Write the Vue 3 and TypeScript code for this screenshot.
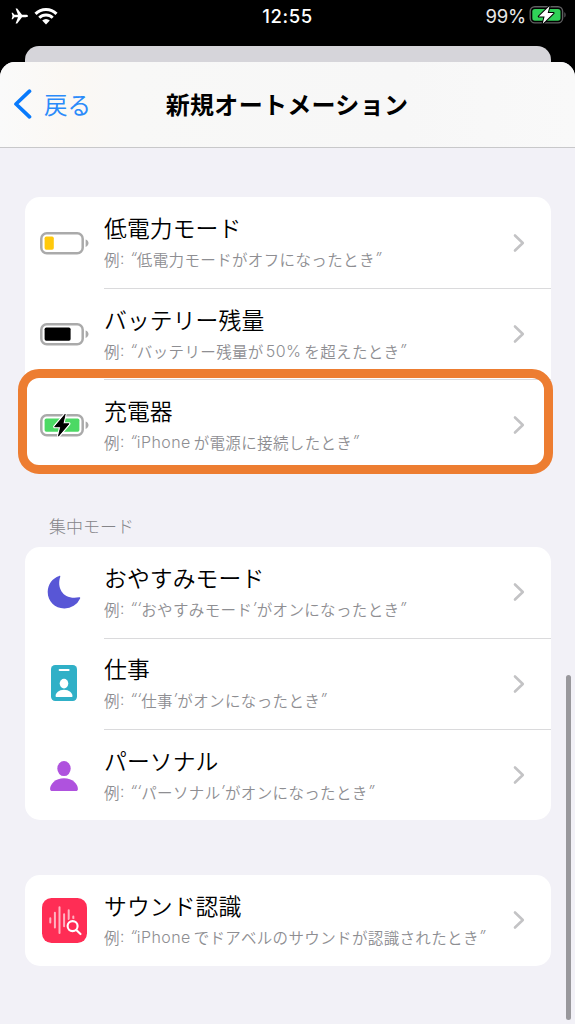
<script setup lang="ts">
type IconName = 'low' | 'level' | 'charger' | 'moon' | 'badge' | 'person' | 'sound'

interface Part {
  text: string
  kind: 'jp' | 'quote' | 'latin'
}

interface Row {
  icon: IconName
  title: string
  parts: Part[]
  highlighted?: boolean
}

interface Group {
  id: string
  heading?: string
  rows: Row[]
}

const jp = (text: string): Part => ({ text, kind: 'jp' })
const quote = (text: string): Part => ({ text, kind: 'quote' })
const latin = (text: string): Part => ({ text, kind: 'latin' })

const groups: Group[] = [
  {
    id: 'power',
    rows: [
      { icon: 'low', title: '低電力モード', parts: [quote('“'), jp('低電力モードがオフになったとき'), quote('”')] },
      { icon: 'level', title: 'バッテリー残量', parts: [quote('“'), jp('バッテリー残量が'), latin('50%'), jp('を超えたとき'), quote('”')] },
      { icon: 'charger', title: '充電器', highlighted: true, parts: [quote('“'), latin('iPhone'), jp('が電源に接続したとき'), quote('”')] },
    ],
  },
  {
    id: 'focus',
    heading: '集中モード',
    rows: [
      { icon: 'moon', title: 'おやすみモード', parts: [quote('“‘'), jp('おやすみモード'), quote('’'), jp('がオンになったとき'), quote('”')] },
      { icon: 'badge', title: '仕事', parts: [quote('“‘'), jp('仕事'), quote('’'), jp('がオンになったとき'), quote('”')] },
      { icon: 'person', title: 'パーソナル', parts: [quote('“‘'), jp('パーソナル'), quote('’'), jp('がオンになったとき'), quote('”')] },
    ],
  },
  {
    id: 'sound',
    rows: [
      { icon: 'sound', title: 'サウンド認識', parts: [quote('“'), latin('iPhone'), jp('でドアベルのサウンドが認識されたとき'), quote('”')] },
    ],
  },
]
</script>

<template>
  <div class="screen">
    <div class="status">
      <div class="status-left">
        <svg class="plane" width="18" height="16" viewBox="0 0 18 16">
          <path d="M17 8c0-.8-1-1.200-2.200-1.200H11L6.200.6H4.600L7 6.800H3.400L1.800 4.700H.6L1.500 8 .6 11.300h1.200l1.600-2.100H7L4.600 15.400h1.600L11 9.200h3.800C16 9.200 17 8.800 17 8z" fill="#fff" />
        </svg>
        <svg class="wifi" width="24" height="18" viewBox="0 0 24 18">
          <g fill="none" stroke="#fff" stroke-width="3">
            <path d="M1.500 6.900a14.900 14.900 0 0 1 21 0" />
            <path d="M5.300 10.800a9.500 9.500 0 0 1 13.400 0" />
          </g>
          <path d="M8.200 13.600a5.400 5.400 0 0 1 7.600 0L12 17.400z" fill="#fff" />
        </svg>
      </div>
      <div class="clock">12:55</div>
      <div class="status-right">
        <span class="percent">99%</span>
        <svg width="38" height="20" viewBox="0 0 38 20">
          <rect x="1.200" y="1.700" width="32.400" height="16.200" rx="4.600" fill="none" stroke="#606062" stroke-width="1.400" />
          <path d="M35.400 7.200c1.600.6 1.600 4.600 0 5.200z" fill="#606062" />
          <rect x="3.300" y="3.900" width="28.200" height="11.800" rx="2.600" fill="#30d158" />
          <path d="M20.600.9 9.800 11.500h5.800L13.700 18.700 24.600 8.100h-5.900z" fill="#fff" stroke="#000" stroke-width="2" stroke-linejoin="round" paint-order="stroke" />
        </svg>
      </div>
    </div>

    <div class="sheet-behind"></div>

    <div class="sheet">
      <header class="nav">
        <div class="back">
          <svg width="19" height="30" viewBox="0 0 19 30">
            <path d="M16.500 2.200 3 15 16.500 27.800" fill="none" stroke="#087afc" stroke-width="3.700" stroke-linecap="round" stroke-linejoin="round" />
          </svg>
          <span>戻る</span>
        </div>
        <h1>新規オートメーション</h1>
      </header>

      <main class="content">
        <section v-for="group in groups" :key="group.id" class="group" :class="group.id">
          <h2 v-if="group.heading">{{ group.heading }}</h2>
          <div class="card">
            <div v-for="row in group.rows" :key="row.icon" class="row">
              <div class="icon" :class="row.icon">
                <svg v-if="row.icon === 'low' || row.icon === 'level' || row.icon === 'charger'" width="50" height="26" viewBox="0 0 50 26">
                  <rect x="1.300" y="3.300" width="41.400" height="19.900" rx="5.500" fill="none" stroke="#aaa" stroke-width="2.500" />
                  <path d="M45.600 9.600c3.900 1.100 3.900 6.200 0 7.300z" fill="#aaa" />
                  <rect v-if="row.icon === 'low'" x="4.600" y="6.600" width="9.200" height="13.200" rx="1.700" fill="#ffc90c" />
                  <rect v-if="row.icon === 'level'" x="4.600" y="6.600" width="26" height="13.200" rx="1.700" fill="#000" />
                  <template v-if="row.icon === 'charger'">
                    <rect x="4.600" y="6.600" width="34.800" height="13.200" rx="1.700" fill="#4cd964" />
                    <path d="M25.200 2.200 14.600 14.800h6L18.400 24.200 29 11.700h-6z" fill="#000" stroke="#fff" stroke-width="3" stroke-linejoin="round" paint-order="stroke" />
                    <path d="M25.200 2.200 14.600 14.800h6L18.400 24.200 29 11.700h-6z" fill="#000" stroke="#000" stroke-width="0.700" stroke-linejoin="round" />
                  </template>
                </svg>
                <svg v-else-if="row.icon === 'moon'" width="34" height="34" viewBox="0 0 34 34">
                  <path d="M12.200.9C13.100.6 13.500 1.100 13.200 1.900 9.500 13 16.300 25.300 32.100 22.300c.9-.2 1.300.3 1 1.100A17 17 0 0 1 17.200 33.500C8 33.500.7 26.500.7 17.100.7 9.500 5.300 3.100 12.200.9z" fill="#5856d6" />
                </svg>
                <svg v-else-if="row.icon === 'badge'" width="26" height="36" viewBox="0 0 26 36">
                  <rect width="26" height="36" rx="4.200" fill="#30b0c7" />
                  <rect x="7.600" y="3.900" width="11" height="2" rx="1" fill="#fff" />
                  <ellipse cx="13" cy="18.600" rx="4.300" ry="4.800" fill="#fff" />
                  <path d="M5.600 32.100c-.7 0-1-.4-1-1.100 0-3.200 3.200-6.300 8.400-6.300s8.500 3.100 8.500 6.300c0 .7-.3 1.100-1 1.100z" fill="#fff" />
                </svg>
                <svg v-else-if="row.icon === 'person'" width="28" height="32" viewBox="0 0 28 32">
                  <ellipse cx="14" cy="8.600" rx="6.700" ry="7.500" fill="#af52de" />
                  <path d="M2.200 31C.9 31 .1 30.400.1 28.900.1 24.100 5.400 18.300 14 18.300S27.900 24.100 27.900 28.900c0 1.500-.8 2.100-2.100 2.100z" fill="#af52de" />
                </svg>
                <svg v-else width="45" height="45" viewBox="0 0 45 45">
                  <rect width="45" height="45" rx="9.500" fill="#ff2d55" />
                  <g stroke="#ffb3c2" stroke-width="2" stroke-linecap="round">
                    <path d="M8.300 20.200v4.300M12.900 14.800v14.800M17.500 9.300V35M22.100 16.200v12M26.700 12.200v9M31.300 18.600v2" />
                  </g>
                  <circle cx="30.600" cy="28.100" r="5.100" fill="#ff2d55" stroke="#ff2d55" stroke-width="4.500" />
                  <g fill="none" stroke="#fff" stroke-width="2.100">
                    <circle cx="30.600" cy="28.100" r="5" />
                    <path d="m34.300 31.900 4.200 4.200" stroke-linecap="round" />
                  </g>
                </svg>
              </div>
              <div class="body">
                <div class="text">
                  <div class="title">{{ row.title }}</div>
                  <div class="example">
                    <span class="jp">例</span><span class="colon">:</span><span v-for="(part, i) in row.parts" :key="i" :class="part.kind">{{ part.text }}</span>
                  </div>
                </div>
                <svg class="chevron" width="12" height="20" viewBox="0 0 12 20">
                  <path d="m2 2.500 7.800 7.500L2 17.500" fill="none" stroke="#c3c3c5" stroke-width="2.600" stroke-linecap="round" stroke-linejoin="round" />
                </svg>
              </div>
              <div v-if="row.highlighted" class="highlight"></div>
            </div>
          </div>
        </section>
      </main>
      <div class="scrollbar"></div>
    </div>
  </div>
</template>

<style>
body {
  margin: 0;
  overflow: hidden;
}
</style>

<style scoped>
.screen {
  position: relative;
  display: flex;
  flex-direction: column;
  width: 575px;
  height: 1024px;
  overflow: hidden;
  background: #000;
  font-family: "Noto Sans CJK JP", sans-serif;
}
.status {
  display: grid;
  grid-template-columns: 1fr auto 1fr;
  height: 46px;
  color: #fff;
  font-family: Inter, sans-serif;
  line-height: 32px;
}
.status-left {
  display: flex;
  gap: 5px;
  padding: 7px 0 0 11px;
}
.plane {
  margin-top: 1px;
}
.clock {
  font-size: 18.500px;
  font-weight: 500;
  letter-spacing: 0.55px;
}
.status-right {
  display: flex;
  justify-content: flex-end;
  padding-right: 8px;
}
.status-right svg {
  margin: 5px 0 0 3px;
}
.percent {
  font-size: 18.500px;
  letter-spacing: -0.2px;
  color: #e9e9e9;
}
.sheet-behind {
  height: 15.500px;
  margin: 0 24.500px;
  border-radius: 14px 14px 0 0;
  background: #d6d5da;
}
.sheet {
  position: relative;
  flex: 1;
  border-radius: 15px 15px 0 0;
  background: #f2f1f7;
}
.nav {
  display: grid;
  grid-template-columns: 1fr auto 1fr;
  align-items: center;
  box-sizing: border-box;
  height: 86.500px;
  border-bottom: 1.500px solid #c8c8ca;
  border-radius: 15px 15px 0 0;
  background: linear-gradient(90deg, #fafafa 0, #fbf8f4 12%, #f8f8f7 22%, #f7f7f7 70%, #f9f9f9 100%);
}
.back {
  display: flex;
  align-items: center;
  gap: 12px;
  padding-left: 13px;
  color: #2b8bfa;
  font-size: 23.500px;
}
h1 {
  margin: -2px 0.500px 0 -0.500px;
  font-size: 24px;
  font-weight: 700;
  letter-spacing: 0.3px;
}
.content {
  padding: 49px 24.500px 0;
}
.group.sound {
  margin-top: 54.500px;
}
h2 {
  display: flex;
  align-items: flex-end;
  height: 67px;
  margin: 0;
  padding: 0 0 9px 24.500px;
  color: #858589;
  font-size: 17px;
  font-weight: 300;
  line-height: 24px;
}
.card {
  border-radius: 15px;
  background: #fff;
}
.row {
  position: relative;
  display: flex;
  height: 91.200px;
}
.icon {
  display: flex;
  align-items: center;
  justify-content: center;
  width: 79.500px;
}
.icon.low,
.icon.level,
.icon.charger {
  box-sizing: border-box;
  padding-left: 1.500px;
}
.icon.person {
  box-sizing: border-box;
  padding-top: 2px;
}
.body {
  display: flex;
  flex: 1;
  align-items: center;
  justify-content: space-between;
  box-sizing: border-box;
  padding-right: 25.500px;
}
.row + .row .body {
  border-top: 1.400px solid #dadadc;
}
.title {
  height: 34px;
  margin-top: -1px;
  color: #000;
  font-size: 22.800px;
  font-weight: 350;
  letter-spacing: 0.1px;
  line-height: 34px;
  white-space: nowrap;
}
.example {
  display: flex;
  height: 28px;
  color: #8e8e92;
  font-size: 15.500px;
  font-weight: 350;
  line-height: 28px;
  white-space: nowrap;
}
.jp {
  letter-spacing: 0.36px;
}
.colon {
  width: 10px;
  font-family: Inter, sans-serif;
}
.quote {
  font-family: Inter, sans-serif;
  font-style: italic;
}
.latin {
  margin-right: 3px;
  font-family: Inter, sans-serif;
  font-size: 16px;
  letter-spacing: 0.4px;
}
.jp + .latin {
  margin-left: 2px;
}
.highlight {
  position: absolute;
  inset: -10.500px -2.500px -3px -7px;
  border: 9px solid #ed7d31;
  border-radius: 21px;
}
.scrollbar {
  position: absolute;
  top: 613px;
  right: 4.500px;
  width: 5px;
  height: 345px;
  border-radius: 3px;
  background: #99989c;
}
</style>
